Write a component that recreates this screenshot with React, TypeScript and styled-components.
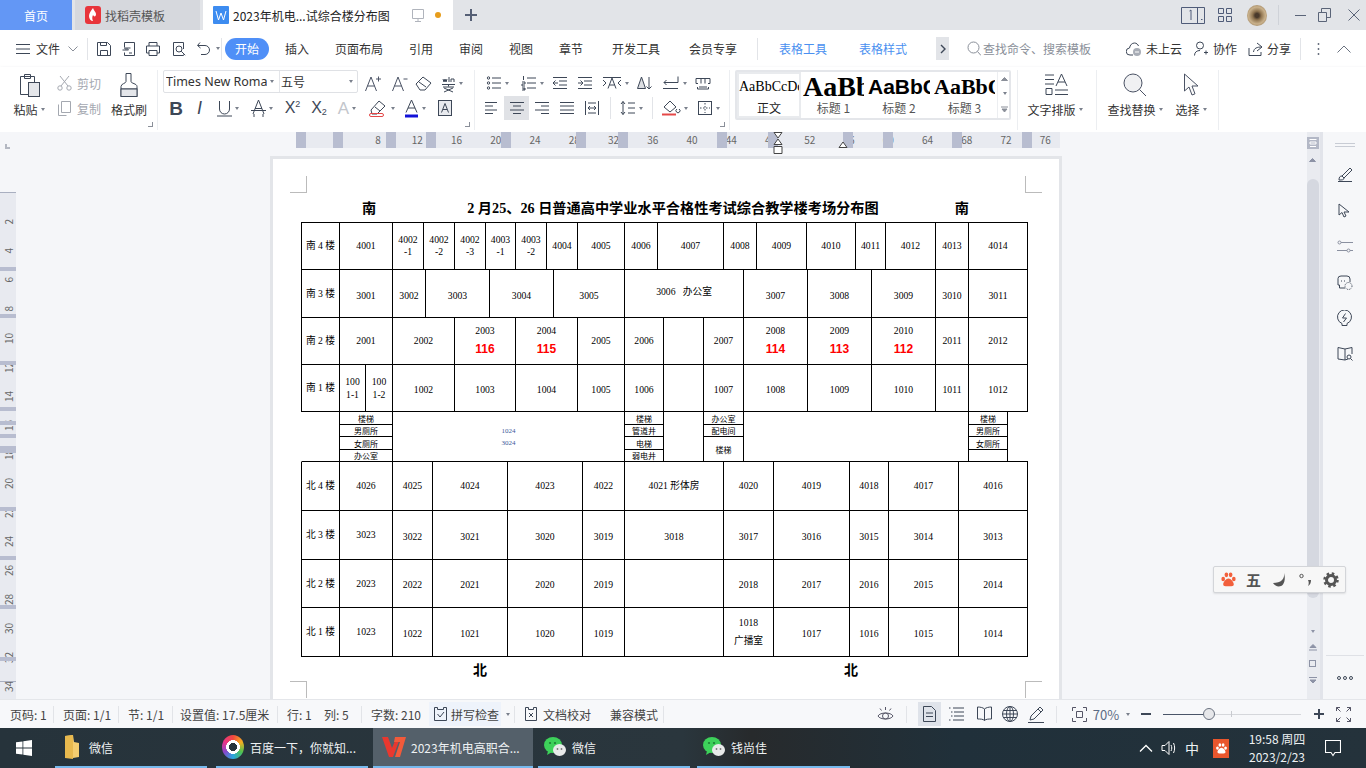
import React from 'react';
import styled, { createGlobalStyle } from 'styled-components';

const UI = `"Noto Sans CJK SC", "Liberation Sans", sans-serif`;
const DOC = `"Liberation Serif", "Noto Sans CJK SC", serif`;

const Global = createGlobalStyle`
  html, body { margin: 0; padding: 0; background: #f5f6f9; }
  * { box-sizing: border-box; }
`;

const Screen = styled.div`
  width: 1366px;
  height: 768px;
  display: flex;
  flex-direction: column;
  overflow: hidden;
  font-family: ${UI};
  font-size: 12px;
  color: #333;
`;

const Glyph = styled.svg<{ $c?: string }>`
  display: block;
  flex: none;
  fill: none;
  stroke: ${p => p.$c || '#3d4757'};
  stroke-width: 1;
`;

const Ic: React.FC<{ w?: number; h?: number; c?: string; children: React.ReactNode }> = ({ w = 16, h = 16, c, children }) => (
  <Glyph width={w} height={h} viewBox={`0 0 ${w} ${h}`} $c={c}>
    {children}
  </Glyph>
);

const Caret = styled.i<{ $c?: string }>`
  display: block;
  flex: none;
  width: 0;
  height: 0;
  border-style: solid;
  border-width: 3px 2.5px 0;
  border-color: ${p => p.$c || '#7a808c'} transparent transparent;
`;

/* title bar */
const TabBar = styled.div`
  height: 30px;
  flex: none;
  display: flex;
  background: #e2e4e8;
`;
const HomeTab = styled.div`
  width: 72px;
  margin-right: 3px;
  display: flex;
  align-items: center;
  justify-content: center;
  background: #6397f5;
  color: #fff;
`;
const DocTab = styled.div<{ $open?: boolean }>`
  width: ${p => (p.$open ? 250 : 125)}px;
  margin-right: 3px;
  padding-left: 10px;
  display: flex;
  align-items: center;
  background: ${p => (p.$open ? '#fff' : '#d6d8dd')};
  color: ${p => (p.$open ? '#222' : '#555')};
`;
const TabLabel = styled.span<{ $w: number }>`
  width: ${p => p.$w}px;
  margin-left: 4px;
  white-space: nowrap;
`;
const OrangeDot = styled.i`
  width: 6px;
  height: 6px;
  margin-left: 10px;
  border-radius: 50%;
  background: #e79d1c;
`;
const AddTab = styled.div`
  width: 30px;
  display: flex;
  align-items: center;
  justify-content: center;
`;
const WinControls = styled.div`
  margin-left: auto;
  padding-right: 6px;
  display: flex;
  align-items: center;
`;
const Avatar = styled.div`
  width: 20px;
  height: 21px;
  margin: 0 11px 0 2px;
  border-radius: 50%;
  background: radial-gradient(circle at 50% 50%, #4a3a2c 0 14%, #8f7450 30%, #c9b18c 58%, #7d6240 100%);
`;
const TitleSep = styled.i`
  width: 1px;
  height: 20px;
  margin-right: 16px;
  background: #cfd2d8;
`;

/* menu row */
const MenuBar = styled.div`
  height: 37px;
  flex: none;
  padding-left: 16px;
  display: flex;
  align-items: center;
  background: #fff;
`;
const Slot = styled.div<{ $w: number; $left?: boolean; $ml?: number }>`
  width: ${p => p.$w}px;
  margin-left: ${p => p.$ml ?? 0}px;
  flex: none;
  display: flex;
  align-items: center;
  justify-content: ${p => (p.$left ? 'flex-start' : 'center')};
  white-space: nowrap;
`;
const MenuSep = styled.i<{ $l?: number; $r?: number }>`
  width: 1px;
  height: 22px;
  flex: none;
  margin: 0 ${p => p.$r ?? 3}px 0 ${p => p.$l ?? 9}px;
  background: #e2e4e8;
`;
const StartPill = styled.div`
  width: 44px;
  height: 22px;
  margin-left: 3px;
  display: flex;
  align-items: center;
  justify-content: center;
  border-radius: 11px;
  background: #4f8ff7;
  color: #fff;
`;
const BlueTab = styled(Slot)`
  color: #4a90f0;
`;
const MoreTabs = styled.div`
  width: 13px;
  height: 23px;
  margin: 0 18px;
  display: flex;
  align-items: center;
  justify-content: center;
  background: #e2e4e8;
`;
const SearchHint = styled.span`
  margin-left: 2px;
  color: #8a8f99;
  white-space: nowrap;
`;
const RightCluster = styled.div`
  margin-left: auto;
  padding-right: 15px;
  display: flex;
  align-items: center;
`;
const MenuText = styled.span<{ $l: number; $r: number }>`
  margin: 0 ${p => p.$r}px 0 ${p => p.$l}px;
  white-space: nowrap;
`;

/* ribbon */
const Ribbon = styled.div`
  height: 65px;
  flex: none;
  display: flex;
  background: #fff;
  box-shadow: 0 1px 3px rgba(60, 70, 90, 0.14);
  position: relative;
`;
const Group = styled.div<{ $w: number; $pad?: number }>`
  width: ${p => p.$w}px;
  height: 60px;
  margin-top: 3px;
  flex: none;
  padding-left: ${p => p.$pad ?? 0}px;
  display: flex;
  position: relative;
  border-right: 1px solid #eceef1;
`;
const Launcher = styled.i`
  position: absolute;
  right: 4px;
  bottom: 3px;
  width: 5px;
  height: 5px;
  border-right: 1px solid #8a8f99;
  border-bottom: 1px solid #8a8f99;
`;
const BigTool = styled.div<{ $w: number }>`
  width: ${p => p.$w}px;
  flex: none;
  padding-top: 2px;
  display: flex;
  flex-direction: column;
  align-items: center;
`;
const BigIcon = styled.div`
  height: 26px;
  display: flex;
  align-items: center;
`;
const BigLabel = styled.div<{ $back?: number }>`
  height: 18px;
  margin-top: 2px;
  margin-right: ${p => p.$back ?? 0}px;
  display: flex;
  align-items: center;
  gap: 3px;
  white-space: nowrap;
`;
const ToolStack = styled.div`
  display: flex;
  flex-direction: column;
`;
const ToolRow = styled.div<{ $low?: boolean }>`
  height: ${p => (p.$low ? 24 : 26)}px;
  display: flex;
  align-items: center;
`;
const Tool = styled.div<{ $w: number; $on?: boolean }>`
  width: ${p => p.$w}px;
  height: 100%;
  flex: none;
  display: flex;
  align-items: center;
  justify-content: center;
  gap: 3px;
  background: ${p => (p.$on ? '#e0e2e6' : 'transparent')};
`;
const MiniTool = styled.div`
  height: 100%;
  padding-left: 3px;
  display: flex;
  align-items: center;
  gap: 5px;
  color: #a4a8b0;
  white-space: nowrap;
`;
const FontCombo = styled.div`
  width: 195px;
  height: 23px;
  margin-bottom: 3px;
  display: flex;
  align-items: center;
  border: 1px solid #dfe1e5;
  border-radius: 2px;
`;
const FontName = styled.div`
  width: 116px;
  height: 100%;
  padding-left: 2px;
  display: flex;
  align-items: center;
  font-family: "Noto Sans", ${UI};
  border-right: 1px solid #e4e6ea;
  white-space: nowrap;
  overflow: hidden;
  gap: 3px;
`;
const FontNameClip = styled.span`
  width: 101px;
  overflow: hidden;
  font-size: 12.5px;
  color: #333;
`;
const FontSize = styled.div`
  flex: 1;
  padding: 0 4px 0 1px;
  display: flex;
  align-items: center;
  justify-content: space-between;
`;
const Face = styled.span<{ $bold?: boolean; $it?: boolean; $c?: string; $size?: number }>`
  font-family: "Liberation Sans", sans-serif;
  font-weight: ${p => (p.$bold ? 700 : 400)};
  font-style: ${p => (p.$it ? 'italic' : 'normal')};
  font-size: ${p => p.$size ?? 17}px;
  line-height: 1;
  color: ${p => p.$c || '#3d4757'};
`;
const Sup = styled(Face)<{ $lift: number }>`
  margin-top: ${p => p.$lift}px;
  margin-left: -3px;
`;
const Gallery = styled.div`
  width: 276px;
  height: 50px;
  margin-left: 5px;
  display: flex;
  border: 2px solid #e4e6ea;
  border-radius: 2px;
  background: #fff;
`;
const StyleCard = styled.div<{ $w: number; $on?: boolean }>`
  width: ${p => p.$w}px;
  flex: none;
  display: flex;
  flex-direction: column;
  align-items: ${p => (p.$on ? 'center' : 'flex-start')};
  border: 2px solid ${p => (p.$on ? '#e9ebee' : 'transparent')};
`;
const StylePreview = styled.div<{ $font: string; $size: number; $bold?: boolean }>`
  width: 100%;
  height: 29px;
  overflow: hidden;
  display: flex;
  align-items: center;
  white-space: nowrap;
  font-family: ${p => p.$font};
  font-size: ${p => p.$size}px;
  font-weight: ${p => (p.$bold ? 700 : 400)};
  color: #000;
`;
const StyleName = styled.div<{ $on?: boolean }>`
  width: 100%;
  text-align: center;
  line-height: 16px;
  color: ${p => (p.$on ? '#222' : '#555')};
`;
const GalleryArrows = styled.div`
  width: 14px;
  flex: none;
  display: flex;
  flex-direction: column;
  align-items: center;
  justify-content: space-around;
  border-left: 1px solid #eceef1;
`;

/* workspace */
const Workspace = styled.div`
  flex: 1;
  display: flex;
  position: relative;
  min-height: 0;
  background: #f5f6f9;
`;
const VRuler = styled.div`
  width: 16px;
  flex: none;
  position: relative;
  padding-top: 60px;
`;
const RulerCorner = styled.i`
  position: absolute;
  left: 5px;
  top: 12px;
  width: 5px;
  height: 5px;
  border-left: 2px solid #b4b8c2;
  border-bottom: 2px solid #b4b8c2;
`;
const VBand = styled.div`
  height: 100%;
  padding-top: 14.5px;
  position: relative;
  overflow: hidden;
  background: #e8eaf0;
  border-top: 1px solid #a9afc0;
`;
const VTick = styled.div`
  height: 29.06px;
  display: flex;
  align-items: center;
  justify-content: center;
  font-size: 10px;
  color: #666;
  span {
    writing-mode: vertical-rl;
    transform: rotate(180deg);
  }
`;
const VMark = styled.i<{ $at: number }>`
  position: absolute;
  left: 0;
  right: 0;
  top: ${p => p.$at}px;
  height: 4px;
  background: #b8bdd0;
`;
const VEnd = styled.i`
  position: absolute;
  left: 0;
  right: 0;
  top: 488px;
  height: 1px;
  background: #a9afc0;
`;
const Center = styled.div`
  flex: 1;
  min-width: 0;
  overflow: hidden;
`;
const HRuler = styled.div`
  width: 764px;
  height: 16px;
  margin-left: 280px;
  padding-left: 62.4px;
  display: flex;
  position: relative;
  background: #e8eaf0;
`;
const HTick = styled.div`
  width: 39.25px;
  flex: none;
  text-align: center;
  font-size: 10px;
  line-height: 16px;
  color: #666;
`;
const HMark = styled.i<{ $at: number }>`
  position: absolute;
  top: 0;
  bottom: 0;
  left: ${p => p.$at}px;
  width: 10px;
  background: #b8bdd0;
`;
const RulerPin = styled.div<{ $at: number }>`
  position: absolute;
  top: 0;
  left: ${p => p.$at}px;
`;
const Page = styled.div`
  width: 786px;
  height: 560px;
  margin: 11px 0 0 257px;
  padding: 39px 0 0 28px;
  position: relative;
  background: #fff;
  box-shadow: 0 0 0 3px #e3e5e9;
`;
const Crop = styled.i<{ $x: 'l' | 'r'; $y: 't' | 'b' }>`
  position: absolute;
  width: 17px;
  height: 17px;
  ${p => (p.$x === 'l' ? 'left: 17px; border-right: 1px solid #bbb;' : 'right: 17px; border-left: 1px solid #bbb;')}
  ${p => (p.$y === 't' ? 'top: 17px; border-bottom: 1px solid #bbb;' : 'top: 522px; border-top: 1px solid #bbb;')}
`;
const TitleRow = styled.div`
  height: 24px;
  padding-bottom: 4px;
  display: flex;
  align-items: center;
  font-family: ${DOC};
  font-size: 14.2px;
  font-weight: 700;
  line-height: 18px;
  color: #000;
`;
const TitleWord = styled.span<{ $l: number }>`
  margin-left: ${p => p.$l}px;
  white-space: nowrap;
`;
const Sheet = styled.div`
  width: 727px;
  border-top: 1px solid #000;
  font-family: ${DOC};
  font-size: 9.7px;
  color: #000;
`;
const FloorRow = styled.div<{ $h: number; $open?: boolean }>`
  height: ${p => p.$h}px;
  display: flex;
  border-left: 1px solid ${p => (p.$open ? 'transparent' : '#000')};
  ${p => p.$open && 'border-bottom: 1px solid #000;'}
`;
const Room = styled.div<{ $w: number; $shift?: number; $raise?: number; $lead?: number; $open?: boolean; $bare?: boolean }>`
  width: ${p => p.$w}px;
  flex: none;
  padding-top: ${p => p.$shift ?? 0}px;
  padding-bottom: ${p => p.$raise ?? 0}px;
  display: flex;
  align-items: center;
  justify-content: center;
  text-align: center;
  white-space: pre-wrap;
  line-height: ${p => p.$lead ?? 13}px;
  ${p => !p.$bare && 'border-right: 1px solid #000;'}
  ${p => !p.$open && 'border-bottom: 1px solid #000;'}
`;
const Score = styled.div`
  font-family: "Liberation Sans", sans-serif;
  font-size: 12px;
  font-weight: 700;
  color: #f00;
  line-height: 18px;
`;
const Stack = styled.div<{ $w: number }>`
  width: ${p => p.$w}px;
  flex: none;
  display: flex;
  flex-direction: column;
  border-right: 1px solid #000;
`;
const StackCell = styled.div<{ $h?: number; $end?: boolean }>`
  ${p => (p.$h ? `height: ${p.$h}px;` : 'flex: 1;')}
  display: flex;
  align-items: center;
  justify-content: center;
  font-size: 8px;
  ${p => !p.$end && 'border-bottom: 1px solid #000;'}
`;
const Hall = styled.div`
  font-size: 7px;
  line-height: 12px;
  color: #3a5a9a;
  text-align: center;
`;
const FootRow = styled.div`
  height: 26px;
  padding-bottom: 2px;
  display: flex;
  align-items: center;
  font-family: ${DOC};
  font-size: 14px;
  font-weight: 700;
  color: #000;
`;

/* scroll column and side panel */
const ScrollCol = styled.div`
  width: 16px;
  flex: none;
  padding: 5px 3px 0 1px;
  display: flex;
  flex-direction: column;
  align-items: center;
  background: #e9ebf0;
  border-right: 3px solid #e2e4ea;
`;
const ScrollPin = styled.div<{ $mt: number }>`
  margin-top: ${p => p.$mt}px;
  display: flex;
`;
const Thumb = styled.div`
  width: 12px;
  height: 419px;
  margin-top: 17px;
  border-radius: 6px;
  background: #d5d8e0;
`;
const SidePanel = styled.div`
  width: 43px;
  flex: none;
  padding-top: 7px;
  display: flex;
  flex-direction: column;
  align-items: center;
  background: #f6f7f9;
`;
const SideItem = styled.div<{ $mt?: number; $h?: number }>`
  height: ${p => p.$h ?? 18}px;
  margin-top: ${p => p.$mt ?? 18}px;
  display: flex;
  align-items: center;
`;
const SideRule = styled.i`
  width: 38px;
  height: 1px;
  margin-top: auto;
  background: #dfe1e6;
`;
const SideDots = styled.div`
  height: 43px;
  display: flex;
  align-items: center;
`;
const ImeBar = styled.div`
  position: absolute;
  left: 1213px;
  top: 434px;
  width: 133px;
  height: 27px;
  padding-left: 2px;
  display: flex;
  align-items: center;
  background: #f7f7f7;
  border: 1px solid #d3d5d9;
  border-radius: 2px;
  box-shadow: 0 1px 2px rgba(0, 0, 0, 0.1);
`;
const ImeCell = styled.div<{ $w: number }>`
  width: ${p => p.$w}px;
  display: flex;
  justify-content: center;
  font-weight: 700;
  font-size: 15px;
  line-height: 1;
  color: #555;
`;

/* status bar */
const StatusBar = styled.div`
  height: 29px;
  flex: none;
  padding-left: 10px;
  display: flex;
  align-items: center;
  background: #f7f8fa;
  border-top: 1px solid #e4e6ea;
  color: #444;
`;
const Stat = styled.div<{ $w?: number }>`
  ${p => p.$w && `width: ${p.$w}px;`}
  flex: none;
  height: 17px;
  display: flex;
  align-items: center;
  white-space: nowrap;
`;
const StatSep = styled.i<{ $l?: number; $r?: number }>`
  width: 1px;
  height: 17px;
  flex: none;
  margin-left: ${p => p.$l ?? 0}px;
  margin-right: ${p => p.$r ?? 9}px;
  background: #e2e4e8;
`;
const SpellBox = styled.div`
  width: 72px;
  height: 24px;
  padding-left: 4px;
  display: flex;
  align-items: center;
  gap: 3px;
  background: #eef3fb;
`;
const CheckBox = styled(SpellBox)`
  width: 86px;
  padding: 0;
  gap: 5px;
  background: transparent;
`;
const ViewBtn = styled.div<{ $w: number; $on?: boolean }>`
  width: ${p => p.$w}px;
  height: 24px;
  flex: none;
  display: flex;
  align-items: center;
  justify-content: center;
  gap: 4px;
  background: ${p => (p.$on ? '#dfe3ea' : 'transparent')};
`;
const ZoomText = styled.span`
  color: #5b6b85;
  font-size: 13px;
`;
const Slider = styled.div`
  width: 138px;
  height: 12px;
  flex: none;
  margin-left: 2px;
  position: relative;
  background: linear-gradient(#d5d7db, #d5d7db) no-repeat center / 100% 1px;
`;
const SliderDone = styled.i`
  position: absolute;
  left: 0;
  top: 5.5px;
  width: 46px;
  height: 1px;
  background: #4a5568;
`;
const SliderThumb = styled.i`
  position: absolute;
  left: 40px;
  top: 0;
  width: 12px;
  height: 12px;
  border-radius: 50%;
  background: #e6e7ea;
  border: 1px solid #6a7280;
`;
const SliderTick = styled.i`
  position: absolute;
  left: 68px;
  top: 3px;
  width: 1px;
  height: 6px;
  background: #c8cacf;
`;

/* windows taskbar */
const TaskBar = styled.div`
  height: 40px;
  flex: none;
  display: flex;
  background: linear-gradient(90deg, #26333b 0%, #2a363d 50%, #272a2c 55%, #20303a 70%, #24323b 100%);
  color: #eef1f3;
`;
const StartBtn = styled.div`
  width: 55px;
  flex: none;
  padding-left: 16px;
  display: flex;
  align-items: center;
`;
const TaskItem = styled.div<{ $w: number; $mr: number; $on?: boolean }>`
  width: ${p => p.$w}px;
  flex: none;
  margin-right: ${p => p.$mr}px;
  padding-left: ${p => (p.$on ? 9 : 5)}px;
  display: flex;
  align-items: center;
  gap: 5px;
  white-space: nowrap;
  background: ${p => (p.$on ? '#54606a' : 'transparent')};
  border-bottom: 2px solid #76b9ed;
`;
const TaskIcon = styled.div`
  width: 24px;
  height: 24px;
  flex: none;
  display: flex;
  align-items: center;
  justify-content: center;
`;
const BaiduBall = styled.div`
  width: 22px;
  height: 24px;
  border-radius: 50%;
  background: radial-gradient(circle, #26333b 0 24%, transparent 25%),
    radial-gradient(circle, #fff 0 42%, transparent 43%),
    conic-gradient(#f0483e, #f7b021, #4fc14f, #27a7e0, #8b45c9, #e8348a, #f0483e);
`;
const Tray = styled.div`
  margin-left: auto;
  padding-right: 25px;
  display: flex;
  align-items: center;
`;
const TrayText = styled.span<{ $l: number; $r: number }>`
  margin: 0 ${p => p.$r}px 0 ${p => p.$l}px;
  font-size: 14px;
`;
const Clock = styled.div`
  width: 60px;
  margin: 0 18px;
  text-align: center;
  line-height: 18px;
  font-size: 12px;
  white-space: nowrap;
`;
const PawBox = styled.div`
  width: 16px;
  height: 19px;
  display: flex;
  align-items: center;
  justify-content: center;
  background: #e9562d;
`;

/* table data: right edge of the cell (page px), its text, and a kind */
type Cell = [number, string?, ('score' | 'wide' | 'flat' | 'raise')?, string?];

const south4: Cell[] = [
  [339, '南 4 楼'], [392, '4001'], [423, '4002\n-1'], [454, '4002\n-2'], [485, '4002\n-3'], [515, '4003\n-1'],
  [546, '4003\n-2'], [577, '4004'], [624, '4005'], [657, '4006'], [723, '4007'], [756, '4008'], [806, '4009'],
  [855, '4010'], [885, '4011'], [935, '4012'], [968, '4013'], [1027, '4014'],
];
const south3: Cell[] = [
  [339, '南 3 楼', 'flat'], [392, '3001'], [425, '3002'], [489, '3003'], [553, '3004'], [624, '3005'],
  [743, '3006   办公室', 'raise'], [807, '3007'], [871, '3008'], [935, '3009'], [968, '3010'], [1027, '3011'],
];
const south2: Cell[] = [
  [339, '南 2 楼'], [392, '2001'], [454, '2002'], [515, '2003', 'score', '116'], [577, '2004', 'score', '115'],
  [624, '2005'], [663, '2006'], [703, ''], [743, '2007'], [807, '2008', 'score', '114'], [871, '2009', 'score', '113'],
  [935, '2010', 'score', '112'], [968, '2011'], [1027, '2012'],
];
const south1: Cell[] = [
  [339, '南 1 楼', 'flat'], [365, '100\n1-1', 'flat'], [392, '100\n1-2', 'flat'], [454, '1002'], [515, '1003'], [577, '1004'],
  [624, '1005'], [663, '1006'], [703, ''], [743, '1007'], [807, '1008'], [871, '1009'], [935, '1010'], [968, '1011'], [1027, '1012'],
];
const northEdges = [339, 392, 432, 507, 582, 624, 723, 773, 849, 888, 958, 1027];
const northRow = (labels: string[]): Cell[] =>
  labels.map((t, i) => [northEdges[i], t, i === 0 ? 'flat' : undefined] as Cell);
const north4 = northRow(['北 4 楼', '4026', '4025', '4024', '4023', '4022', '4021 形体房', '4020', '4019', '4018', '4017', '4016']);
const north3 = northRow(['北 3 楼', '3023', '3022', '3021', '3020', '3019', '3018', '3017', '3016', '3015', '3014', '3013']);
const north2 = northRow(['北 2 楼', '2023', '2022', '2021', '2020', '2019', '', '2018', '2017', '2016', '2015', '2014']);
const north1 = northRow(['北 1 楼', '1023', '1022', '1021', '1020', '1019', '', '1018\n广播室', '1017', '1016', '1015', '1014']);
north3[1][2] = 'flat';
north2[1][2] = 'flat';
north1[1][2] = 'flat';
north1[7][2] = 'wide';

const Floor: React.FC<{ cells: Cell[]; h: number; shift?: number }> = ({ cells, h, shift = 0 }) => {
  let from = 301;
  return (
    <FloorRow $h={h}>
      {cells.map(([edge, text, kind, score], i) => {
        const w = edge - from;
        from = edge;
        return (
          <Room
            key={i}
            $w={w}
            $shift={kind ? 0 : shift}
            $raise={kind === 'raise' ? 3 : kind === 'score' ? 2 : 0}
            $lead={kind === 'wide' || kind === 'score' ? 18 : text && text.startsWith('100\n') ? 13 : 12}
          >
            {kind === 'score' ? (
              <div>
                {text}
                <Score>{score}</Score>
              </div>
            ) : (
              text
            )}
          </Room>
        );
      })}
    </FloorRow>
  );
};

/* icons */
const SaveIc = () => (
  <Ic>
    <path d="M1.5 1.5h10l3 3v10h-13z M4.5 14.5v-5h7v5 M4.5 1.5v3h6v-3" />
  </Ic>
);
const ProofIc = () => (
  <Ic>
    <path d="M3.5 1.5h10v13h-10v-3 M3.5 6.5v-5 M1.5 9h6l-2-2 M9.5 7h-6l2 2 M8 12h3" />
  </Ic>
);
const PrintIc = () => (
  <Ic>
    <path d="M4 5V1.5h8V5 M4 12H1.5V5h13v7H12 M4 9.5h8v5H4z" />
  </Ic>
);
const PreviewIc = () => (
  <Ic>
    <path d="M12.5 8V1.5h-10v13h10v-1" />
    <circle cx="8" cy="8" r="3" />
    <path d="M10.2 10.2l4 4" />
  </Ic>
);
const UndoIc = () => (
  <Ic>
    <path d="M4 1.5L1.5 4.5 4.5 7 M2 4.5h7a4.5 4.5 0 0 1 0 9H5" />
  </Ic>
);
const MonoBars = ({ rows }: { rows: number[][] }) => (
  <Ic>
    <path d={rows.map(([x, y, l]) => `M${x} ${y}h${l}`).join(' ')} />
  </Ic>
);
const BulletsIc = () => (
  <Ic>
    <circle cx="2.5" cy="3" r="1.2" />
    <circle cx="2.5" cy="8" r="1.2" />
    <circle cx="2.5" cy="13" r="1.2" />
    <path d="M6 3h9 M6 8h9 M6 13h9" />
  </Ic>
);
const NumbersIc = () => (
  <Ic>
    <path d="M2.5 1v4 M1 7h3v2H1v2h3 M1 13h3v2H1 M4 14H2 M6 3h9 M6 8h9 M6 13h9" />
  </Ic>
);
const IndentIc = ({ flip }: { flip?: boolean }) => (
  <Ic>
    <path d="M1 2.5h14 M7 6h8 M7 10h8 M1 13.5h14" />
    <path d={flip ? 'M1 8h5 M3.5 5.5L1 8l2.5 2.5' : 'M1 8h5 M3.5 5.5L6 8l-2.5 2.5'} />
  </Ic>
);
const TextCaseIc = () => (
  <Ic w={20} h={16}>
    <path d="M1 2.5h18 M6 13.5L10 3l4 10.5 M7.5 10h5 M1 5l3 3-3 3 M19 5l-3 3 3 3" />
  </Ic>
);
const SortIc = () => (
  <Ic>
    <path d="M1.5 13.5L5.5 2l4 11.5z" fill="#dcdee2" />
    <path d="M13 2v12 M10.5 11.5L13 14l2.5-2.5" />
  </Ic>
);
const ReturnIc = () => (
  <Ic w={19} h={16}>
    <path d="M17 1.5v6H3 M5.5 5L3 7.5 5.5 10 M2 13.5h15" />
  </Ic>
);
const RulerIc = () => (
  <Ic>
    <path d="M1 3.5h14 M1 3.5v5h2 M6 3.5v5 M10 3.5v5 M15 3.5v5h-2 M4 12h8 M2.5 12v2h11v-2" />
  </Ic>
);
const DistIc = () => (
  <Ic>
    <path d="M1.5 1v14 M14.5 1v14 M4 3h8 M4 8h8 M4 13h8 M6 6L4 8l2 2 M10 6l2 2-2 2" />
  </Ic>
);
const LineGapIc = () => (
  <Ic>
    <path d="M3 1.5v13 M1 4l2-2.5L5 4 M1 12l2 2.5L5 12 M8 3h7 M8 8h7 M8 13h7" />
  </Ic>
);
const ShadeIc = () => (
  <Ic w={20} h={18}>
    <path d="M3 8l6-6 6 6-6 5z" />
    <path d="M1 15.5h14" stroke="#e54848" strokeWidth="2" />
    <path d="M16 10a2 2 0 1 0 2 0" />
  </Ic>
);
const BordersIc = () => (
  <Ic>
    <rect x="1.5" y="1.5" width="13" height="13" />
    <path d="M8 3v10 M3 8h10" strokeDasharray="1.5 1.5" />
  </Ic>
);
const EraserIc = () => (
  <Ic w={18} h={18}>
    <path d="M1 10l7-7 8 6-6 7H5z" />
    <path d="M4 8l7 5" />
  </Ic>
);
const HighlightIc = () => (
  <Ic w={20} h={20}>
    <path d="M3 12l8-9 6 5-8 8H4z" />
    <path d="M7 9l5 4" />
    <rect x="1.5" y="15.5" width="14" height="3" rx="1.5" stroke="#e54848" />
  </Ic>
);
const GrowIc = () => (
  <Ic w={16} h={17} c="#4a5264">
    <path d="M.5 16L6 2l5.500 14 M2.500 11h7 M11 4h5 M13.500 1.500v5" />
  </Ic>
);
const ShrinkIc = () => (
  <Ic w={16} h={17} c="#4a5264">
    <path d="M.5 16L6 2l5.500 14 M2.500 11h7 M11.500 4h4" />
  </Ic>
);

const hMarks = [0, 37, 90, 130, 205, 280, 322, 421, 472, 547, 587, 656, 726];
const vMarks = [74, 121, 168, 214, 228, 241, 253, 256, 314, 363, 412, 464];
const hTicks = [8, 12, 16, 20, 24, 28, 32, 36, 40, 44, 48, 52, 56, 60, 64, 68, 72, 76];
const vTicks = [2, 4, 6, 8, 10, 12, 14, 16, 18, 20, 22, 24, 26, 28, 30, 32, 34];

const menuTabs: [string, number][] = [
  ['插入', 56], ['页面布局', 68], ['引用', 56], ['审阅', 44], ['视图', 56], ['章节', 44], ['开发工具', 86], ['会员专享', 68],
];

const WeChatIc = () => (
  <svg width="24" height="24" viewBox="0 0 24 24">
    <ellipse cx="10" cy="10" rx="9" ry="8" fill="#3dd15a" />
    <path d="M5 16l-1 4 5-3z" fill="#3dd15a" />
    <ellipse cx="16.5" cy="15" rx="6.5" ry="6" fill="#e8eaea" />
    <circle cx="7" cy="8" r="1.1" fill="#1d7f35" />
    <circle cx="12" cy="8" r="1.1" fill="#1d7f35" />
    <circle cx="14.5" cy="14" r=".9" fill="#777" />
    <circle cx="18.5" cy="14" r=".9" fill="#777" />
  </svg>
);

const PawIc = ({ c, s }: { c: string; s: number }) => (
  <svg width={s} height={s} viewBox="0 0 16 16" fill={c}>
    <ellipse cx="3" cy="7.5" rx="1.7" ry="2.1" />
    <ellipse cx="6" cy="3.6" rx="1.7" ry="2.2" />
    <ellipse cx="10" cy="3.6" rx="1.7" ry="2.2" />
    <ellipse cx="13" cy="7.5" rx="1.7" ry="2.1" />
    <path d="M8 7c2.2 0 5 3.500 5 5.400 0 2-2 1.900-5 1.900s-5 .1-5-1.900C3 10.500 5.800 7 8 7z" />
  </svg>
);

const App: React.FC = () => (
  <Screen>
    <Global />
    <TabBar>
      <HomeTab>首页</HomeTab>
      <DocTab>
        <svg width="16" height="18" viewBox="0 0 16 18">
          <rect width="16" height="18" rx="3" fill="#e8343a" />
          <path d="M8 2C6 5 4 7 4 10c0 3 2 5 4 5-1-2-1-4 0-6 1 2 3 2 3-1 0-2-2-3-3-6z" fill="#fff" />
        </svg>
        <TabLabel $w={70}>找稻壳模板</TabLabel>
      </DocTab>
      <DocTab $open>
        <svg width="16" height="18" viewBox="0 0 16 18">
          <rect width="16" height="18" rx="1" fill="#3d8cf0" />
          <path d="M3 5l2.500 9L8 7l2.500 7L13 5" fill="none" stroke="#fff" />
        </svg>
        <TabLabel $w={178}>2023年机电...试综合楼分布图</TabLabel>
        <Ic w={14} h={16} c="#b0b4bc">
          <path d="M1.500 2.500h11v9h-11z M7 11.500v3 M4 14.500h6" />
        </Ic>
        <OrangeDot />
      </DocTab>
      <AddTab>
        <Ic w={14} h={14} c="#555f75">
          <path d="M7 1v12 M1 7h12" strokeWidth="2" />
        </Ic>
      </AddTab>
      <WinControls>
        <Ic w={24} h={17} c="#4f5b78">
          <path d="M.5.5h23v16H.5z M16.500.500v16 M20 12.500h1.500" />
          <path d="M8.500 4l1.500-1v10" />
        </Ic>
        <Slot $w={40}>
          <Ic w={14} h={14} c="#4f5b78">
            <path d="M.5.5h5v5h-5z M8.500.5h5v5h-5z M.5 8.500h5v5h-5z M8.500 8.500h5v5h-5z" />
          </Ic>
        </Slot>
        <Avatar />
        <TitleSep />
        <Ic w={11} h={3} c="#5a6478">
          <path d="M0 1.500h11" />
        </Ic>
        <Slot $w={37}>
          <Ic w={13} h={14} c="#5a6478">
            <path d="M.5 4.500h8v9h-8z M3.500 4.500v-4h9v9h-4" />
          </Ic>
        </Slot>
        <Slot $w={5}> </Slot>
        <Ic w={12} h={12} c="#5a6478">
          <path d="M.5.5l11 11 M11.500.5l-11 11" />
        </Ic>
      </WinControls>
    </TabBar>

    <MenuBar>
      <Slot $w={20} $left>
        <Ic w={14} h={12}>
          <path d="M0 1.500h14 M0 6h14 M0 10.500h14" />
        </Ic>
      </Slot>
      <Slot $w={32} $left>文件</Slot>
      <Slot $w={10}>
        <Ic w={10} h={6} c="#8a8f99">
          <path d="M.5.5L5 5l4.500-4.500" />
        </Ic>
      </Slot>
      <MenuSep />
      <Slot $w={25}><SaveIc /></Slot>
      <Slot $w={25}><ProofIc /></Slot>
      <Slot $w={24}><PrintIc /></Slot>
      <Slot $w={28}><PreviewIc /></Slot>
      <Slot $w={22}><UndoIc /></Slot>
      <Slot $w={5}><Caret /></Slot>
      <MenuSep $l={1} $r={0} />
      <StartPill>开始</StartPill>
      {menuTabs.map(([t, w]) => (
        <Slot key={t} $w={w}>{t}</Slot>
      ))}
      <MenuSep $l={10} $r={0} />
      <BlueTab $w={90}>表格工具</BlueTab>
      <BlueTab $w={70}>表格样式</BlueTab>
      <MoreTabs>
        <Ic w={6} h={10}>
          <path d="M1 1l4 4-4 4" strokeWidth="1.400" />
        </Ic>
      </MoreTabs>
      <Ic w={14} h={16} c="#8a8f99">
        <circle cx="6.500" cy="6.500" r="5.500" />
        <path d="M10.500 10.500l3.500 4" />
      </Ic>
      <SearchHint>查找命令、搜索模板</SearchHint>
      <RightCluster>
        <svg width="15" height="14" viewBox="0 0 15 14" fill="none" stroke="#3d4757">
          <path d="M7 13H4a3.500 3.500 0 0 1-.5-7C4 3 6 1 8.500 1c2 0 3.500 1.500 4 3" />
          <circle cx="11" cy="10" r="4" fill="#a8adb6" stroke="none" />
          <path d="M9 10h4" stroke="#fff" />
        </svg>
        <MenuText $l={5} $r={12}>未上云</MenuText>
        <Ic w={14} h={15}>
          <circle cx="6" cy="4.500" r="3.500" />
          <path d="M.5 14.500c0-3.500 2.500-5 5.500-5 M10 11.500h4 M12 9.500v4" />
        </Ic>
        <MenuText $l={5} $r={11}>协作</MenuText>
        <Ic w={15} h={14}>
          <path d="M1 6v7.500h12V10 M9 1l5 4-5 4 M14 5c-5 0-8 1-8.500 5" />
        </Ic>
        <MenuText $l={4} $r={9}>分享</MenuText>
        <MenuSep $l={0} $r={16} />
        <Ic w={3} h={14} c="#6a7280">
          <path d="M1.500 1v2 M1.500 6v2 M1.500 11v2" strokeWidth="1.500" />
        </Ic>
        <Slot $w={17}> </Slot>
        <Ic w={14} h={8} c="#6a7280">
          <path d="M.5 7.500L7 1l6.500 6.500" />
        </Ic>
      </RightCluster>
    </MenuBar>

    <Ribbon>
      <Group $w={158} $pad={4}>
        <BigTool $w={50}>
          <BigIcon>
            <Ic w={23} h={26}>
              <path d="M2.500 4.500h14v18h-14z M6.500 2.500h6v4h-6z" />
              <rect x="10.500" y="10.500" width="11" height="14" fill="#e4e6ea" />
            </Ic>
          </BigIcon>
          <BigLabel>粘贴<Caret /></BigLabel>
        </BigTool>
        <ToolStack>
          <ToolRow>
            <MiniTool>
              <Ic w={15} h={16} c="#a4a8b0">
                <path d="M3 1l8 10 M12 1L4 11" />
                <circle cx="3" cy="13" r="2.200" />
                <circle cx="12" cy="13" r="2.200" />
              </Ic>
              剪切
            </MiniTool>
          </ToolRow>
          <ToolRow $low>
            <MiniTool>
              <Ic w={15} h={16} c="#a4a8b0">
                <path d="M4.500 1.500h9v11h-9z M1.500 4.500v11h8" />
              </Ic>
              复制
            </MiniTool>
          </ToolRow>
        </ToolStack>
        <BigTool $w={56}>
          <BigIcon>
            <Ic w={20} h={26}>
              <path d="M7 1.500h5v8c0 2 6 2 6 5v10H2v-10c0-3 5-3 5-5z M2 17h16" />
              <rect x="2" y="17" width="16" height="7.500" fill="#e4e6ea" />
            </Ic>
          </BigIcon>
          <BigLabel>格式刷</BigLabel>
        </BigTool>
        <Launcher />
      </Group>

      <Group $w={317} $pad={5}>
        <ToolStack>
          <ToolRow>
            <FontCombo>
              <FontName>
                <FontNameClip>Times New Roman</FontNameClip>
                <Caret />
              </FontName>
              <FontSize>
                五号
                <Caret />
              </FontSize>
            </FontCombo>
            <Tool $w={30}><GrowIc /></Tool>
            <Tool $w={23}><ShrinkIc /></Tool>
            <Tool $w={26}><EraserIc /></Tool>
            <Tool $w={30}>
              <Ic w={15} h={20}>
                <path d="M2 6l1 3 1-3 1 3 1-3 M8 4v5 M10 9V6h3v3 M1 11.500h13 M7.500 11.500v2 M2 14h11 M3 19l9-4 M3 15l9 4" />
              </Ic>
              <Caret />
            </Tool>
          </ToolRow>
          <ToolRow $low>
            <Tool $w={26}><Face $bold $size={19}>B</Face></Tool>
            <Tool $w={21}><Face $it $size={18}>I</Face></Tool>
            <Tool $w={36}>
              <Ic w={15} h={17}>
                <path d="M2.500 1v8a5 5 0 0 0 10 0V1 M0 16h15" />
              </Ic>
              <Caret />
            </Tool>
            <Tool $w={31}>
              <Ic w={15} h={18}>
                <path d="M2 15L7.500 1 13 15 M4 9.500h7 M0 11.500h15 M3 18v-3 M12 18v-3" />
              </Ic>
              <Caret />
            </Tool>
            <Tool $w={31}>
              <Face $size={16}>X</Face>
              <Sup $size={9} $lift={-7}>2</Sup>
            </Tool>
            <Tool $w={22}>
              <Face $size={16}>X</Face>
              <Sup $size={9} $lift={8}>2</Sup>
            </Tool>
            <Tool $w={34}>
              <Face $size={17} $c="#c3c6cc">A</Face>
              <Caret />
            </Tool>
            <Tool $w={34}>
              <HighlightIc />
              <Caret />
            </Tool>
            <Tool $w={34}>
              <Ic w={15} h={19}>
                <path d="M2 13.500L7.500 1 13 13.500 M4 9h7" />
                <path d="M1 17h13" stroke="#1212d8" strokeWidth="3" />
              </Ic>
              <Caret />
            </Tool>
            <Tool $w={25}>
              <Ic w={14} h={16}>
                <rect x=".5" y=".5" width="13" height="15" fill="#e8eaee" />
                <path d="M3.500 12.500L7 3.500l3.500 9 M5 9.500h4" />
              </Ic>
            </Tool>
          </ToolRow>
        </ToolStack>
        <Launcher />
      </Group>

      <Group $w={255} $pad={5}>
        <ToolStack>
          <ToolRow>
            <Tool $w={34}><BulletsIc /><Caret /></Tool>
            <Tool $w={36}><NumbersIc /><Caret /></Tool>
            <Tool $w={20}><IndentIc flip /></Tool>
            <Tool $w={30}><IndentIc /></Tool>
            <Tool $w={30}><TextCaseIc /><Caret /></Tool>
            <Tool $w={28}><SortIc /></Tool>
            <Tool $w={32}><ReturnIc /><Caret /></Tool>
            <Tool $w={26}><RulerIc /></Tool>
          </ToolRow>
          <ToolRow $low>
            <Tool $w={24}><MonoBars rows={[[1, 2.5, 12], [1, 6, 8], [1, 10, 12], [1, 13.5, 8]]} /></Tool>
            <Tool $w={25} $on><MonoBars rows={[[1, 2.5, 14], [4, 6, 8], [1, 10, 14], [4, 13.5, 8]]} /></Tool>
            <Tool $w={26}><MonoBars rows={[[1, 2.5, 14], [7, 6, 8], [1, 10, 14], [7, 13.5, 8]]} /></Tool>
            <Tool $w={24}><MonoBars rows={[[1, 2.5, 14], [1, 6, 14], [1, 10, 14], [1, 13.5, 14]]} /></Tool>
            <Tool $w={26}><DistIc /></Tool>
            <Tool $w={10}><MenuSep $l={0} $r={0} /></Tool>
            <Tool $w={32}><LineGapIc /><Caret /></Tool>
            <Tool $w={10}><MenuSep $l={0} $r={0} /></Tool>
            <Tool $w={34}><ShadeIc /><Caret /></Tool>
            <Tool $w={34}><BordersIc /><Caret /></Tool>
          </ToolRow>
        </ToolStack>
        <Launcher />
      </Group>

      <Group $w={288}>
        <Gallery>
          <StyleCard $w={64} $on>
            <StylePreview $font={DOC} $size={14}>AaBbCcDd</StylePreview>
            <StyleName $on>正文</StyleName>
          </StyleCard>
          <StyleCard $w={65}>
            <StylePreview $font={DOC} $size={28} $bold>AaBb</StylePreview>
            <StyleName>标题 1</StyleName>
          </StyleCard>
          <StyleCard $w={66}>
            <StylePreview $font={`"Liberation Sans", sans-serif`} $size={21} $bold>AaBbC</StylePreview>
            <StyleName>标题 2</StyleName>
          </StyleCard>
          <StyleCard $w={65}>
            <StylePreview $font={DOC} $size={22} $bold>AaBbC</StylePreview>
            <StyleName>标题 3</StyleName>
          </StyleCard>
          <GalleryArrows>
            <Ic w={7} h={4} c="#8a8f99"><path d="M.5 3.500l3-3 3 3z" fill="#8a8f99" /></Ic>
            <Caret />
            <Ic w={7} h={7} c="#8a8f99"><path d="M0 1h7 M1 3h5L3.500 6z" fill="#8a8f99" /></Ic>
          </GalleryArrows>
        </Gallery>
      </Group>

      <Group $w={79}>
        <BigTool $w={78}>
          <BigIcon>
            <Ic w={24} h={24}>
              <path d="M0 2h9 M0 6.500h9 M0 11h9 M11 13L16.500 1 22 13 M13 9h7 M1 15.500h6v6H1z M10 17h13 M10 21.500h13" />
            </Ic>
          </BigIcon>
          <BigLabel $back={4}>文字排版<Caret /></BigLabel>
        </BigTool>
      </Group>

      <Group $w={122}>
        <BigTool $w={76}>
          <BigIcon>
            <Ic w={24} h={24} c="#4a5264">
              <circle cx="10" cy="10" r="9" fill="#f0f1f3" />
              <path d="M16.500 16.500l6.500 6.500" />
            </Ic>
          </BigIcon>
          <BigLabel>查找替换<Caret /></BigLabel>
        </BigTool>
        <BigTool $w={36}>
          <BigIcon>
            <Ic w={17} h={24} c="#4a5264">
              <path d="M1.500 1v17l4.500-4 3 8 3-1.200-3-7.800h6z" fill="#fafafa" />
            </Ic>
          </BigIcon>
          <BigLabel>选择<Caret /></BigLabel>
        </BigTool>
      </Group>
    </Ribbon>

    <Workspace>
      <VRuler>
        <RulerCorner />
        <VBand>
          {vTicks.map(n => (
            <VTick key={n}>
              <span>{n}</span>
            </VTick>
          ))}
          {vMarks.map(y => (
            <VMark key={y} $at={y} />
          ))}
          <VEnd />
        </VBand>
      </VRuler>

      <Center>
        <HRuler>
          {hTicks.map(n => (
            <HTick key={n}>{n}</HTick>
          ))}
          {hMarks.map(x => (
            <HMark key={x} $at={x} />
          ))}
          <RulerPin $at={477}>
            <Ic w={10} h={22} c="#444">
              <path d="M1 .5h8L5 6z M1 12.500L5 7l4 5.500z M1 14.500h8v7H1z" fill="#fff" />
            </Ic>
          </RulerPin>
          <RulerPin $at={542}>
            <Ic w={10} h={16} c="#444">
              <path d="M1 15.500L5 10l4 5.500z" fill="#fff" />
            </Ic>
          </RulerPin>
        </HRuler>
        <Page>
          <Crop $x="l" $y="t" />
          <Crop $x="r" $y="t" />
          <Crop $x="l" $y="b" />
          <Crop $x="r" $y="b" />
          <TitleRow>
            <TitleWord $l={61}>南</TitleWord>
            <TitleWord $l={91}>2 月25、26 日普通高中学业水平合格性考试综合教学楼考场分布图</TitleWord>
            <TitleWord $l={76}>南</TitleWord>
          </TitleRow>
          <Sheet>
            <Floor cells={south4} h={47} />
            <Floor cells={south3} h={48} shift={5} />
            <Floor cells={south2} h={47} />
            <Floor cells={south1} h={47} shift={3} />
            <FloorRow $h={50} $open>
              <Room $w={38} $open />
              <Stack $w={53}>
                <StackCell $h={13}>楼梯</StackCell>
                <StackCell $h={12}>男厕所</StackCell>
                <StackCell $h={13}>女厕所</StackCell>
                <StackCell $end>办公室</StackCell>
              </Stack>
              <Room $w={232} $open>
                <Hall>
                  1024
                  <br />
                  3024
                </Hall>
              </Room>
              <Stack $w={39}>
                <StackCell $h={13}>楼梯</StackCell>
                <StackCell $h={12}>管道井</StackCell>
                <StackCell $h={13}>电梯</StackCell>
                <StackCell $end>弱电井</StackCell>
              </Stack>
              <Room $w={40} $open />
              <Stack $w={40}>
                <StackCell $h={13}>办公室</StackCell>
                <StackCell $h={12}>配电间</StackCell>
                <StackCell $end>楼梯</StackCell>
              </Stack>
              <Room $w={225} $open />
              <Stack $w={39}>
                <StackCell $h={13}>楼梯</StackCell>
                <StackCell $h={12}>男厕所</StackCell>
                <StackCell $h={13}>女厕所</StackCell>
                <StackCell $end />
              </Stack>
              <Room $w={20} $open $bare />
            </FloorRow>
            <Floor cells={north4} h={49} />
            <Floor cells={north3} h={49} shift={3} />
            <Floor cells={north2} h={48} shift={3} />
            <Floor cells={north1} h={49} shift={4} />
          </Sheet>
          <FootRow>
            <TitleWord $l={172}>北</TitleWord>
            <TitleWord $l={357}>北</TitleWord>
          </FootRow>
        </Page>
      </Center>

      <ScrollCol>
        <Ic w={12} h={12} c="#fff">
          <rect width="12" height="12" fill="#b3b8c6" stroke="none" />
          <path d="M2.500 2.500h7 M3 5h6v2H3z M3 9.500h6" />
        </Ic>
        <ScrollPin $mt={9}>
          <Ic w={7} h={4} c="#8d93a6"><path d="M.5 3.500l3-3 3 3z" fill="#8d93a6" /></Ic>
        </ScrollPin>
        <Thumb />
        <ScrollPin $mt={32}>
          <Caret $c="#8d93a6" />
        </ScrollPin>
        <ScrollPin $mt={11}>
          <Ic w={8} h={8} c="#8d93a6"><path d="M1 3.500L4 .5l3 3z M0 6h8" fill="#8d93a6" /></Ic>
        </ScrollPin>
        <ScrollPin $mt={8}>
          <Ic w={7} h={7} c="#8d93a6"><rect x=".5" y=".5" width="6" height="6" /></Ic>
        </ScrollPin>
        <ScrollPin $mt={9}>
          <Ic w={8} h={8} c="#8d93a6"><path d="M0 1.500h8 M1 4l3 3 3-3z" fill="#8d93a6" /></Ic>
        </ScrollPin>
      </ScrollCol>

      <SidePanel>
        <SideItem $mt={0} $h={12}>
          <Ic w={20} h={4} c="#c8ccd4"><path d="M0 .5h20 M0 3.500h20" /></Ic>
        </SideItem>
        <SideItem $mt={14}>
          <Ic w={16} h={15}>
            <path d="M1 14.500h14 M2 13c0-3 1-4 3-4l2 2c0 2-2 2-5 2z M5 9l8-8 2 2-8 8" />
          </Ic>
        </SideItem>
        <SideItem>
          <Ic w={14} h={15}>
            <path d="M1 1v11l3-2.500 2 4.500 2-1-2-4h5z" />
          </Ic>
        </SideItem>
        <SideItem>
          <Ic w={16} h={13} c="#8a90a0">
            <circle cx="2.500" cy="2.500" r="1.500" />
            <path d="M4 2.500h12 M0 10.500h10" />
            <circle cx="11.500" cy="10.500" r="1.500" />
            <path d="M13 10.500h3" />
          </Ic>
        </SideItem>
        <SideItem>
          <Ic w={16} h={15}>
            <path d="M8 13H2.500v-3H1V3.500Q1 1 4 1h6q3 0 3 3v3 M4 6h1 M7 6h1" />
            <circle cx="11.500" cy="11" r="3.500" strokeDasharray="1 1" />
          </Ic>
        </SideItem>
        <SideItem>
          <Ic w={15} h={16}>
            <path d="M5 13.500a7 7 0 1 1 5 0v2H5z M8.500 3.500L5.500 8h4L6.500 12" />
          </Ic>
        </SideItem>
        <SideItem>
          <Ic w={16} h={14}>
            <path d="M8 13V2L1 .5v11.500L8 13l3-1 M8 2l7-1.500V7" />
            <circle cx="12" cy="10" r="2" />
            <path d="M13.500 11.500l2 2" />
          </Ic>
        </SideItem>
        <SideRule />
        <SideDots>
          <Ic w={16} h={4}>
            <circle cx="2" cy="2" r="1.500" />
            <circle cx="8" cy="2" r="1.500" />
            <circle cx="14" cy="2" r="1.500" />
          </Ic>
        </SideDots>
      </SidePanel>

      <ImeBar>
        <ImeCell $w={24}><PawIc c="#f2603c" s={17} /></ImeCell>
        <ImeCell $w={27}>五</ImeCell>
        <ImeCell $w={25}>
          <svg width="13" height="14" viewBox="0 0 13 14" fill="#555">
            <path d="M11 0c1 6-3 10-11 10 2 3 5 4 8 3s5-7 3-13z" />
          </svg>
        </ImeCell>
        <ImeCell $w={26}>
          <svg width="13" height="13" viewBox="0 0 13 13">
            <circle cx="2.500" cy="3" r="1.700" fill="none" stroke="#555" />
            <path d="M9 7h3c0 3-1 5-3 6 1-2 1-4 0-6z" fill="#555" />
          </svg>
        </ImeCell>
        <ImeCell $w={25}>
          <svg width="16" height="16" viewBox="0 0 16 16" fill="none" stroke="#555">
            <circle cx="8" cy="8" r="4.500" strokeWidth="3" />
            <circle cx="8" cy="8" r="6.500" strokeWidth="2.500" strokeDasharray="2.500 2.600" />
          </svg>
        </ImeCell>
      </ImeBar>
    </Workspace>

    <StatusBar>
      <Stat $w={43}>页码: 1</Stat>
      <StatSep />
      <Stat $w={55}>页面: 1/1</Stat>
      <StatSep />
      <Stat $w={44}>节: 1/1</Stat>
      <StatSep $r={7} />
      <Stat $w={97}>设置值: 17.5厘米</Stat>
      <StatSep />
      <Stat $w={37}>行: 1</Stat>
      <Stat $w={37}>列: 5</Stat>
      <StatSep />
      <Stat $w={58}>字数: 210</Stat>
      <SpellBox>
        <Ic w={15} h={16}>
          <path d="M1.500 1.500h3v2h6v-2h3v13h-12z M4.500 8l2.500 3 4-5" />
        </Ic>
        拼写检查
      </SpellBox>
      <Slot $w={13}><Caret /></Slot>
      <StatSep />
      <CheckBox>
        <Ic w={14} h={16}>
          <path d="M1.500 1.500h3v2h5v-2h3v13h-11z M5 7l4 4 M9 7l-4 4" />
        </Ic>
        文档校对
      </CheckBox>
      <Slot $w={48}>兼容模式</Slot>
      <StatSep $l={5} />
      <RightCluster>
        <Ic w={17} h={17} c="#556">
          <path d="M1 10c2-4 13-4 15 0-2 4-13 4-15 0z M8.500 1v3 M3 2.500l1.500 2 M14 2.500l-1.500 2" />
          <circle cx="8.500" cy="10" r="3" />
        </Ic>
        <StatSep $l={12} $r={0} />
        <Slot $w={11}> </Slot>
        <ViewBtn $w={23} $on>
          <Ic w={13} h={16}>
            <path d="M.5.5h8l4 4v11H.5z M3 7h7 M3 10.500h7" />
          </Ic>
        </ViewBtn>
        <ViewBtn $w={31}>
          <Ic w={15} h={14}>
            <path d="M0 1h1.500 M4 1h11 M2 5h1.500 M5 5h10 M2 9h1.500 M5 9h10 M0 13h1.500 M4 13h11" />
          </Ic>
        </ViewBtn>
        <ViewBtn $w={24}>
          <Ic w={15} h={16}>
            <path d="M7.500 3C6 1.500 3 1 .5 1v12c3 0 5.500 0 7 1.500 1.500-1.500 4-1.500 7-1.500V1c-2.500 0-5.500.5-7 2z M7.500 3v11.500" />
          </Ic>
        </ViewBtn>
        <ViewBtn $w={28}>
          <Ic w={16} h={16}>
            <circle cx="8" cy="8" r="7.500" />
            <ellipse cx="8" cy="8" rx="3.500" ry="7.500" />
            <path d="M.5 8h15 M1.500 4.500h13 M1.500 11.500h13 M8 .5v15" />
          </Ic>
        </ViewBtn>
        <ViewBtn $w={24}>
          <Ic w={17} h={17}>
            <path d="M0 16.500h16 M2 14l1-4 9-9 3 3-9 9z M10 3l3 3" />
          </Ic>
        </ViewBtn>
        <StatSep $l={8} $r={0} />
        <Slot $w={15}> </Slot>
        <Ic w={15} h={15} c="#556">
          <path d="M.5 4V.5H4 M11 .5h3.500V4 M14.500 11v3.500H11 M4 14.500H.5V11 M4.500 4.500h6v6h-6z" />
        </Ic>
        <Slot $w={38}><ZoomText>70%</ZoomText></Slot>
        <Slot $w={6}><Caret /></Slot>
        <Slot $w={30}>
          <Ic w={10} h={2} c="#3d4757"><path d="M0 1h10" strokeWidth="2" /></Ic>
        </Slot>
        <Slider>
          <SliderDone />
          <SliderTick />
          <SliderThumb />
        </Slider>
        <Slot $w={34} $ml={1}>
          <Ic w={10} h={10} c="#3d4757"><path d="M5 0v10 M0 5h10" strokeWidth="2" /></Ic>
        </Slot>
        <Slot $w={15}>
          <Ic w={15} h={15} c="#556">
            <path d="M.5 4V.5H4 M.5.5l4 4 M11 .5h3.500V4 M14.500.5l-4 4 M14.500 11v3.500H11 M14.500 14.500l-4-4 M4 14.500H.5V11 M.5 14.500l4-4" />
          </Ic>
        </Slot>
      </RightCluster>
    </StatusBar>

    <TaskBar>
      <StartBtn>
        <svg width="16" height="16" viewBox="0 0 16 16" fill="#fff">
          <path d="M0 2.300l6.500-.9v6.200H0z M7.300 1.300L16 0v7.600H7.300z M0 8.400h6.500v6.200L0 13.700z M7.300 8.400H16V16l-8.700-1.300z" />
        </svg>
      </StartBtn>
      <TaskItem $w={152} $mr={9}>
        <TaskIcon>
          <svg width="14" height="24" viewBox="0 0 14 24">
            <path d="M0 1l8-1 1 7 5 1v14l-6 1-8-1z" fill="#f4cd70" />
            <path d="M0 1l8-1v24l-8-1z" fill="#e8b94e" />
          </svg>
        </TaskIcon>
        微信
      </TaskItem>
      <TaskItem $w={152} $mr={5}>
        <TaskIcon><BaiduBall /></TaskIcon>
        百度一下，你就知...
      </TaskItem>
      <TaskItem $w={160} $mr={5} $on>
        <TaskIcon>
          <svg width="24" height="20" viewBox="0 0 24 20">
            <path d="M0 0h6l4 11 3-7h4l-6 16H7z" fill="#e8382f" />
            <path d="M13 0h11l-6 20h-5l2-6 3-9h-6z" fill="#f25a3a" />
          </svg>
        </TaskIcon>
        2023年机电高职合...
      </TaskItem>
      <TaskItem $w={152} $mr={7}>
        <TaskIcon><WeChatIc /></TaskIcon>
        微信
      </TaskItem>
      <TaskItem $w={153} $mr={0}>
        <TaskIcon><WeChatIc /></TaskIcon>
        钱尚佳
      </TaskItem>
      <Tray>
        <Ic w={14} h={8} c="#fff">
          <path d="M1 7.500L7 1.500l6 6" strokeWidth="1.300" />
        </Ic>
        <Slot $w={8}> </Slot>
        <Ic w={15} h={16} c="#fff">
          <path d="M1 5.500h3L8 1.500v13L4 10.500H1z M10 5c1 2 1 4 0 6 M12.500 3c1.500 3 1.500 7 0 10" />
        </Ic>
        <TrayText $l={9} $r={14}>中</TrayText>
        <PawBox><PawIc c="#fff" s={13} /></PawBox>
        <Clock>
          19:58 周四
          <br />
          2023/2/23
        </Clock>
        <Ic w={16} h={17} c="#fff">
          <path d="M.5.5h15v12H10l-2 3-2-3H.5z" strokeWidth="1.100" />
        </Ic>
      </Tray>
    </TaskBar>
  </Screen>
);

export default App;
